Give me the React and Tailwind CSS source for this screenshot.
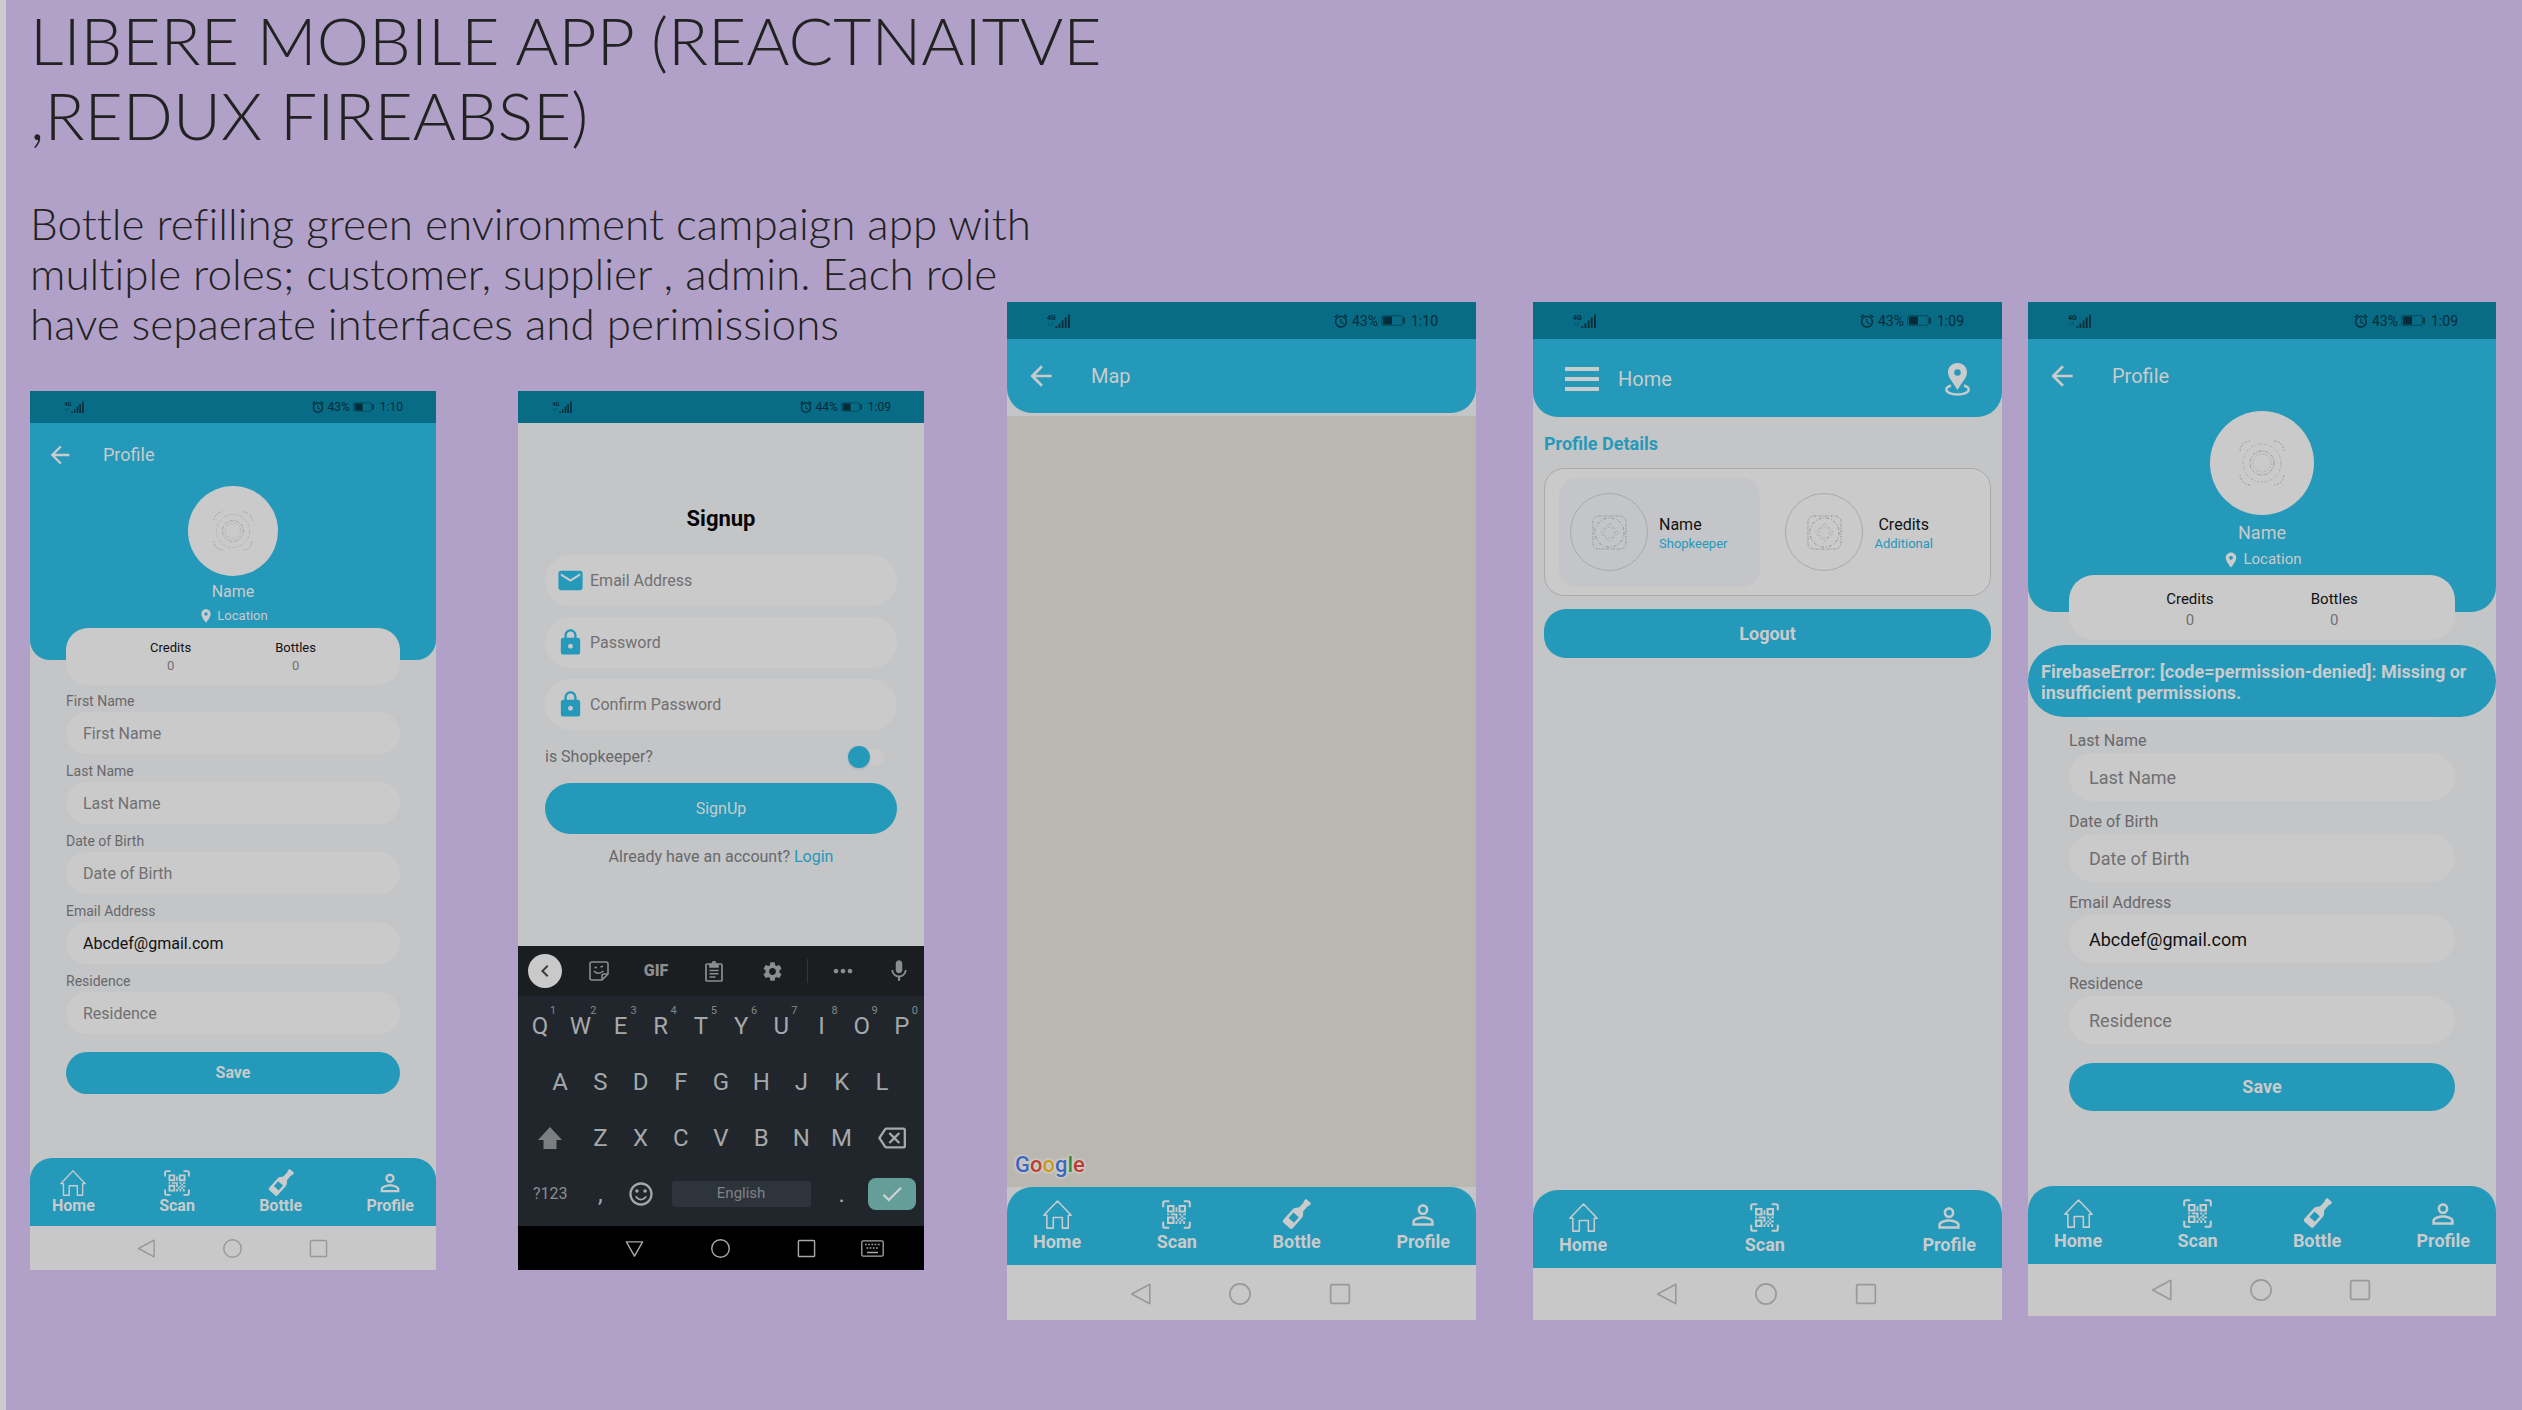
import React from "react";
import {
  MdArrowBack,
  MdLocationOn,
  MdPersonOutline,
  MdEmail,
  MdLock,
  MdSettings,
  MdMic,
  MdMoreHoriz,
  MdOutlineBackspace,
  MdOutlineSentimentSatisfied,
  MdCheck,
  MdChevronLeft,
  MdAlarm,
} from "react-icons/md";

/* Two phone sizes share one set of screens. */
const SIZES = {
  sm: {
    status: "h-8 pl-[34px] pr-[33px] text-xs",
    signal: "w-5 h-3",
    alarm: "size-[14px]",
    battery: "w-[21px] h-[10px]",
    header: "h-[63px] pt-px pl-4 gap-[29px]",
    arrow: "size-7",
    title: "text-lg",
    avatar: "size-[90px]",
    placeholder: "size-10",
    name: "mt-1 text-base leading-6",
    location: "text-[13px] leading-6",
    pin: "size-4",
    hero: "pb-8 rounded-b-[20px]",
    gutter: "mx-9",
    card: "-mt-8 h-[57px] pt-px rounded-[22px] text-[13px] leading-[18px]",
    fields: "mt-[5px] gap-[6px]",
    label: "h-[22px] text-sm leading-[22px]",
    input: "h-[42px] rounded-[21px] pl-[17px] text-base",
    save: "mt-[18px] h-[42px] rounded-[21px] text-base",
    tabs: "h-[68px] pt-[11px] px-[22px] rounded-t-[22px] text-base",
    tabIcon: "h-[27px]",
    icon: "size-[26px]",
    person: "size-7",
    tabText: "leading-5",
    nav: "h-11",
    navIcon: "size-[19px]",
  },
  lg: {
    status: "h-[37px] pl-10 pr-[38px] text-sm",
    signal: "w-[23px] h-[14px]",
    alarm: "size-4",
    battery: "w-6 h-[11px]",
    header: "h-[74px] pl-[18px] gap-[34px]",
    arrow: "size-8",
    title: "text-xl",
    avatar: "-mt-0.5 size-[104px]",
    placeholder: "size-[46px]",
    name: "mt-1 text-lg leading-[27px]",
    location: "text-[15px] leading-[27px]",
    pin: "size-[18px]",
    hero: "pb-[39px] rounded-b-[25px]",
    gutter: "mx-[41px]",
    card: "-mt-[37px] h-[65px] pt-1 rounded-[25px] text-[15px] leading-[21px]",
    fields: "mt-[7px] gap-2",
    label: "h-[25px] text-base leading-[25px]",
    input: "h-12 rounded-[24px] pl-5 text-lg",
    save: "mt-[19px] h-12 rounded-[24px] text-lg",
    tabs: "h-[78px] pt-[13px] px-[26px] rounded-t-[25px] text-lg",
    tabIcon: "h-[29px]",
    icon: "size-[29px]",
    person: "size-8",
    tabText: "leading-[25px]",
    nav: "h-[52px]",
    navIcon: "size-[22px]",
  },
};

function StatusBar({ s, battery, time }) {
  return (
    <div className={`flex shrink-0 items-center justify-between bg-[#086c86] text-[#052b37] ${s.status}`}>
      <svg viewBox="0 0 23 14" className={s.signal} fill="currentColor">
        <text x="0" y="6" fontSize="7" fontWeight="700" fontFamily="Roboto, sans-serif">4G</text>
        <path d="M2 8.5v3M1 10.500l1 1 1-1M5 11.500v-3M4 9.500l1-1 1 1" stroke="currentColor" strokeWidth=".5" fill="none" opacity=".5" />
        <path d="M8.500 12h1.600v2H8.500zM11.500 9.500h1.800V14h-1.800zM14.700 6.500h1.800V14h-1.800zM17.800 3.500h1.800V14h-1.800zM21 .5h1.800V14H21z" />
      </svg>
      <div className="flex items-center gap-[3px]">
        <MdAlarm className={s.alarm} />
        <span>{battery}</span>
        <svg viewBox="0 0 24 11" className={s.battery}>
          <rect x=".7" y=".7" width="20.600" height="9.600" rx="1.500" fill="none" stroke="currentColor" strokeWidth="1" opacity=".55" />
          <rect x="2" y="1.500" width="9" height="8" fill="currentColor" />
          <rect x="22.300" y="2.500" width="1.500" height="6" fill="currentColor" />
        </svg>
        <span className="pl-[3px]">{time}</span>
      </div>
    </div>
  );
}

function BackHeader({ s, title }) {
  return (
    <div className={`flex items-center text-[#c9cbcc] ${s.header}`}>
      <button type="button" aria-label="Back">
        <MdArrowBack className={s.arrow} />
      </button>
      <h2 className={s.title}>{title}</h2>
    </div>
  );
}

function HomeIcon({ className }) {
  return (
    <svg viewBox="0 0 24 24" className={className} fill="none" stroke="currentColor" strokeWidth="1.300" strokeLinejoin="round">
      <path d="M12 .8 23.300 12.600H20.900V23.300H16V14.500H8.500V23.300H3.200V12.600H.7z" />
    </svg>
  );
}

function ScanIcon({ className }) {
  return (
    <svg viewBox="0 0 24 24" className={className} fill="none" stroke="currentColor">
      <path d="M1 6V2.500A1.500 1.500 0 0 1 2.500 1H6M18 1h3.500A1.500 1.500 0 0 1 23 2.500V6M23 18v3.500a1.500 1.500 0 0 1-1.500 1.500H18M6 23H2.500A1.500 1.500 0 0 1 1 21.500V18" strokeWidth="1.700" />
      <path d="M5 5h4.500v4.500H5zM14.500 5H19v4.500h-4.500zM5 14.500h4.500V19H5z" strokeWidth="1.700" />
      <path d="M11.200 6h1.500v4h-1.500zM4.200 11.200h1.600v1.500H4.200zM7.300 11.200h5.500v1.500H7.300zM11.200 12.700h1.600v3h-1.600zM14.300 11.200h1.600v1.600h-1.600zM17.500 11.200h2.300v1.500h-2.300zM15.900 12.800h1.600v1.600h-1.600zM14.300 14.400h1.600V16h-1.600zM17.500 14.400h2.300V16h-2.300zM12.700 16h1.600v1.600h-1.600zM15.900 16h1.600v1.600h-1.600zM11.200 17.600h1.600v2.200h-1.600zM14.300 17.600h1.600v2.200h-1.600zM17.500 17.600h1.600v2.200h-1.600z" fill="currentColor" stroke="none" />
    </svg>
  );
}

function BottleIcon({ className }) {
  return (
    <svg viewBox="0 0 24 24" className={`overflow-visible ${className}`} fill="currentColor">
      <path
        transform="rotate(42 12 12)"
        fillRule="evenodd"
        d="M9.700-3h4.600q.6 0 .6.600v2q0 .6-.6.800V5.500c0 2 2.900 2.800 2.900 5.500V22.500q0 1.700-1.700 1.700H8.500q-1.700 0-1.700-1.700V11c0-2.700 2.900-3.500 2.900-5.500V.4Q9.100.2 9.100-.4v-2q0-.6.600-.6zM9 12.500V18.500h6V12.500z"
      />
    </svg>
  );
}

function Tab({ s, label, children }) {
  return (
    <a href="#" className="flex flex-col items-center font-bold">
      <span className={`flex items-center ${s.tabIcon}`}>{children}</span>
      <span className={s.tabText}>{label}</span>
    </a>
  );
}

function TabBar({ s, bottle = true }) {
  return (
    <nav className={`flex shrink-0 items-start justify-between bg-[#2499b9] text-[#c9cbcc] ${s.tabs}`}>
      <Tab s={s} label="Home"><HomeIcon className={s.icon} /></Tab>
      <Tab s={s} label="Scan"><ScanIcon className={s.icon} /></Tab>
      {bottle && <Tab s={s} label="Bottle"><BottleIcon className={s.icon} /></Tab>}
      <Tab s={s} label="Profile"><MdPersonOutline className={s.person} /></Tab>
    </nav>
  );
}

function SystemNav({ s, dark = false }) {
  const tone = dark ? "bg-black text-[#a8a8a8]" : "bg-[#c8c8c8] text-[#999999]";
  return (
    <div className={`grid shrink-0 grid-cols-[73fr_86fr_86fr_86fr_75fr] items-center ${tone} ${s.nav}`}>
      <span />
      <button type="button" aria-label="Back" className="flex justify-center">
        <svg viewBox="0 0 20 20" className={s.navIcon} fill="none" stroke="currentColor" strokeWidth="1.500" strokeLinejoin="round">
          {dark ? <path d="M1.500 3h17L10 18z" /> : <path d="M18 1.200v17.600L1.500 10z" />}
        </svg>
      </button>
      <button type="button" aria-label="Home" className="flex justify-center">
        <svg viewBox="0 0 20 20" className={s.navIcon} fill="none" stroke="currentColor" strokeWidth="1.500">
          <circle cx="10" cy="10" r="9.200" />
        </svg>
      </button>
      <button type="button" aria-label="Recent apps" className="flex justify-center">
        <svg viewBox="0 0 20 20" className={s.navIcon} fill="none" stroke="currentColor" strokeWidth="1.500">
          <rect x="1.500" y="1.500" width="17" height="17" rx="1" />
        </svg>
      </button>
      {dark && (
        <button type="button" aria-label="Switch keyboard" className="flex pl-3">
          <svg viewBox="0 0 23 17" className="h-[17px] w-[23px]" fill="none" stroke="currentColor">
            <rect x=".8" y=".8" width="21.400" height="15.400" rx="1.500" strokeWidth="1.300" />
            <path d="M4 4.500h15M5.500 8h12" strokeWidth="1.700" strokeDasharray="1.700 1.500" />
            <path d="M6 12.500h11" strokeWidth="1.500" />
          </svg>
        </button>
      )}
    </div>
  );
}

function DottedRings({ className }) {
  return (
    <svg viewBox="0 0 46 46" className={className} fill="none" stroke="#999999" strokeWidth="1">
      <circle cx="23" cy="23" r="9" stroke="#adadad" strokeDasharray="2 1.300" />
      <circle cx="23" cy="23" r="12" strokeDasharray="3 1.300 1 1.300" />
      <circle cx="23" cy="23" r="19" stroke="#a5a5a5" strokeDasharray="2 1.500 1 2" />
      <path d="M1 11Q2 2 11 1M35 1q9 1 10 10M45 35q-1 9-10 10M11 45Q2 44 1 35" strokeDasharray="2 1.500" />
    </svg>
  );
}

function DottedTile({ className }) {
  return (
    <svg viewBox="0 0 36 36" className={className} fill="none" stroke="#8f8f8f" strokeWidth="1">
      <rect x="1" y="1" width="34" height="34" rx="6" strokeDasharray="2 1.200 1 1.500" />
      <circle cx="18" cy="18" r="15" strokeDasharray="3 2 1 2" />
      <path d="M18 8.500 27.500 18 18 27.500 8.500 18z" stroke="#a8a8a8" strokeDasharray="3 2" />
      <circle cx="18" cy="18" r="5.500" stroke="#a8a8a8" strokeDasharray="2 2" />
    </svg>
  );
}

function Field({ s, id, label, value }) {
  return (
    <div className="flex flex-col">
      <label htmlFor={id} className={`text-[#68686b] ${s.label}`}>{label}</label>
      <input
        id={id}
        type="text"
        placeholder={label}
        defaultValue={value}
        className={`w-full bg-[#cacaca] text-[#111111] outline-none placeholder:text-[#707072] ${s.input}`}
      />
    </div>
  );
}

function Phone({ className, children }) {
  return <section className={`relative flex flex-col bg-[#c4c5c7] ${className}`}>{children}</section>;
}

function ProfileScreen({ s, className, prefix, time, error }) {
  return (
    <Phone className={className}>
      <StatusBar s={s} battery="43%" time={time} />
      <div className={`flex flex-col bg-[#2499b9] text-[#c9cbcc] ${s.hero}`}>
        <BackHeader s={s} title="Profile" />
        <div className="flex flex-col items-center">
          <div className={`flex items-center justify-center rounded-full bg-[#cacaca] ${s.avatar}`}>
            <DottedRings className={s.placeholder} />
          </div>
          <p className={s.name}>Name</p>
          <p className={`flex items-center gap-[3px] ${s.location}`}>
            <MdLocationOn className={s.pin} />
            Location
          </p>
        </div>
      </div>
      <dl className={`relative flex items-center justify-evenly bg-[#cacaca] text-center ${s.gutter} ${s.card}`}>
        <div>
          <dt className="text-[#111111]">Credits</dt>
          <dd className="text-[#707072]">0</dd>
        </div>
        <div>
          <dt className="text-[#111111]">Bottles</dt>
          <dd className="text-[#707072]">0</dd>
        </div>
      </dl>
      <form className={`relative flex flex-1 flex-col ${s.gutter}`}>
        <div className={`flex flex-col ${s.fields}`}>
          {error ? (
            <div>
              <div className={s.label} />
              <div className={`bg-[#cacaca] ${s.input}`} />
            </div>
          ) : (
            <Field s={s} id={`${prefix}-first`} label="First Name" />
          )}
          <Field s={s} id={`${prefix}-last`} label="Last Name" />
          <Field s={s} id={`${prefix}-dob`} label="Date of Birth" />
          <Field s={s} id={`${prefix}-email`} label="Email Address" value="Abcdef@gmail.com" />
          <Field s={s} id={`${prefix}-residence`} label="Residence" />
        </div>
        <button type="button" className={`bg-[#2499b9] font-bold text-[#c9cbcc] ${s.save}`}>Save</button>
        {error && (
          <p
            role="alert"
            className="absolute -inset-x-[41px] top-[5px] flex h-[72px] items-center rounded-[36px] bg-[#2499b9] pt-0.5 pr-3 pl-[13px] text-lg leading-[21px] font-bold text-[#c9cbcc]"
          >
            {error}
          </p>
        )}
      </form>
      <TabBar s={s} />
      <SystemNav s={s} />
    </Phone>
  );
}

function IconField({ icon: Icon, label, type }) {
  return (
    <label className="flex h-[51px] items-center gap-[5px] rounded-[26px] bg-[#cacaca] pr-4 pl-[11px]">
      <Icon className="size-[29px] shrink-0 text-[#2499b9]" />
      <input
        type={type}
        aria-label={label}
        placeholder={label}
        className="w-full min-w-0 text-base outline-none placeholder:text-[#707072]"
      />
    </label>
  );
}

const TOP_ROW = ["Q", "W", "E", "R", "T", "Y", "U", "I", "O", "P"];
const HOME_ROW = ["A", "S", "D", "F", "G", "H", "J", "K", "L"];
const BOTTOM_ROW = ["Z", "X", "C", "V", "B", "N", "M"];

function Keyboard() {
  return (
    <div className="flex shrink-0 flex-col bg-[#20262b] text-[#a5a8aa]">
      <div className="grid h-[50px] grid-cols-[53fr_56fr_58fr_58fr_58fr_12fr_60fr_51fr] items-center justify-items-center bg-[#1b1e20] text-[#8b8d8f]">
        <button type="button" aria-label="Collapse toolbar" className="flex size-[34px] items-center justify-center rounded-full bg-[#c9c9c9] text-[#3c3c3c]">
          <MdChevronLeft className="size-6" />
        </button>
        <button type="button" aria-label="Stickers">
          <svg viewBox="0 0 20 20" className="size-5" fill="none" stroke="currentColor" strokeWidth="1.600">
            <path d="M3 1h14a2 2 0 0 1 2 2v10l-6 6H3a2 2 0 0 1-2-2V3a2 2 0 0 1 2-2z" />
            <path d="M19 13h-4q-2 0-2 2v4" />
            <path d="M5 10q4 4.500 9.500 0M5.500 6.500h2.500M11.500 6l2.500-.8" />
          </svg>
        </button>
        <button type="button" className="text-base font-black">GIF</button>
        <button type="button" aria-label="Clipboard">
          <svg viewBox="0 0 18 21" className="h-[21px] w-[18px]" fill="none" stroke="currentColor" strokeWidth="1.700">
            <rect x="1" y="3" width="16" height="17" rx="1" />
            <path d="M5 3.500h8v2.500H5z" fill="currentColor" />
            <circle cx="9" cy="2.300" r="1.500" />
            <path d="M4.500 9.500h9M4.500 12.700h9M4.500 16h6" strokeWidth="1.500" />
          </svg>
        </button>
        <button type="button" aria-label="Settings"><MdSettings className="size-[23px]" /></button>
        <span className="h-6 w-px bg-[#33373a]" />
        <button type="button" aria-label="More"><MdMoreHoriz className="size-7" /></button>
        <button type="button" aria-label="Voice input"><MdMic className="size-[26px]" /></button>
      </div>

      <div className="flex flex-col px-0.5 pt-0.5 pb-1 text-2xl">
        <div className="grid h-14 grid-cols-10">
          {TOP_ROW.map((key, i) => (
            <button key={key} type="button" className="relative">
              {key}
              <span className="absolute top-[7px] right-1 text-[11px] leading-none text-[#85888a]">{(i + 1) % 10}</span>
            </button>
          ))}
        </div>
        <div className="grid h-14 grid-cols-9 px-5">
          {HOME_ROW.map((key) => (
            <button key={key} type="button">{key}</button>
          ))}
        </div>
        <div className="grid h-14 grid-cols-[60fr_40fr_40fr_40fr_40fr_40fr_40fr_40fr_60fr]">
          <button type="button" aria-label="Shift" className="flex items-center justify-center">
            <svg viewBox="0 0 24 22" className="h-[22px] w-6 text-[#7b7f82]" fill="currentColor">
              <path d="M12 0 24 13h-5.500v9h-13v-9H0z" />
            </svg>
          </button>
          {BOTTOM_ROW.map((key) => (
            <button key={key} type="button">{key}</button>
          ))}
          <button type="button" aria-label="Delete" className="flex items-center justify-center">
            <MdOutlineBackspace className="size-7" />
          </button>
        </div>
        <div className="grid h-14 grid-cols-[60fr_40fr_40fr_160fr_40fr_60fr] items-center justify-items-center">
          <button type="button" className="text-base text-[#8b8e90]">?123</button>
          <button type="button">,</button>
          <button type="button" aria-label="Emoji"><MdOutlineSentimentSatisfied className="size-7" /></button>
          <button type="button" className="h-[26px] w-[139px] rounded-[3px] bg-[#2e343c] text-[15px] text-[#7f8386]">English</button>
          <button type="button">.</button>
          <button type="button" aria-label="Done" className="flex h-8 w-12 items-center justify-center rounded-lg bg-[#659e99] text-[#d0d4d4]">
            <MdCheck className="size-[26px]" />
          </button>
        </div>
      </div>
    </div>
  );
}

function SignupScreen({ className }) {
  const s = SIZES.sm;
  return (
    <Phone className={className}>
      <StatusBar s={s} battery="44%" time="1:09" />
      <form className="mx-[27px] flex flex-1 flex-col pt-[81px]">
        <h2 className="text-center text-[22px] leading-[30px] font-bold text-[#060606]">Signup</h2>
        <div className="mt-[21px] flex flex-col gap-[11px]">
          <IconField icon={MdEmail} label="Email Address" type="email" />
          <IconField icon={MdLock} label="Password" type="password" />
          <IconField icon={MdLock} label="Confirm Password" type="password" />
        </div>
        <label className="flex h-[53px] items-center justify-between pr-[13px] text-base text-[#68686b]">
          is Shopkeeper?
          <input
            type="checkbox"
            className="relative h-4 w-9 appearance-none rounded-full bg-[#cacaca] before:absolute before:-top-[3px] before:left-0 before:size-[22px] before:rounded-full before:bg-[#2499b9] before:shadow-sm before:content-['']"
          />
        </label>
        <button type="button" className="h-[51px] rounded-[26px] bg-[#2499b9] text-base text-[#c9cbcc]">SignUp</button>
        <p className="mt-[11px] text-center text-base leading-6 text-[#68686b]">
          Already have an account? <a href="#" className="text-[#2499b9]">Login</a>
        </p>
      </form>
      <Keyboard />
      <SystemNav s={s} dark />
    </Phone>
  );
}

function MapScreen({ className }) {
  const s = SIZES.lg;
  return (
    <Phone className={className}>
      <StatusBar s={s} battery="43%" time="1:10" />
      <div className="rounded-b-[25px] bg-[#2499b9]">
        <BackHeader s={s} title="Map" />
      </div>
      <div className="mt-[3px] flex flex-1 items-end bg-[#bab7b0] pb-[6px] pl-2">
        <span className="text-[22px] leading-8 font-medium [text-shadow:0_0_2px_#d8d8d8,0_0_3px_#d8d8d8,0_0_4px_#d0d0d0]">
          <span className="text-[#3a66bc]">G</span>
          <span className="text-[#bd3d31]">o</span>
          <span className="text-[#c99a16]">o</span>
          <span className="text-[#3a66bc]">g</span>
          <span className="text-[#2c8a45]">l</span>
          <span className="text-[#bd3d31]">e</span>
        </span>
      </div>
      <TabBar s={s} />
      <div className="bg-[#c8c8c8] pt-[3px]">
        <SystemNav s={s} />
      </div>
    </Phone>
  );
}

function HomeScreen({ className }) {
  const s = SIZES.lg;
  return (
    <Phone className={className}>
      <StatusBar s={s} battery="43%" time="1:09" />
      <div className="flex h-[78px] items-center justify-between rounded-b-[25px] bg-[#2499b9] px-8 pt-0.5 text-[#c9cbcc]">
        <div className="flex items-center gap-[19px]">
          <button type="button" aria-label="Menu" className="flex w-[34px] flex-col gap-[6px]">
            <span className="h-1 bg-[#c9cbcc]" />
            <span className="h-1 bg-[#c9cbcc]" />
            <span className="h-1 bg-[#c9cbcc]" />
          </button>
          <h2 className={s.title}>Home</h2>
        </div>
        <button type="button" aria-label="Map">
          <svg viewBox="0 0 25 33" className="h-[33px] w-[25px]">
            <path d="M6 22.500Q1.300 24 1.300 26.500c0 3 5 5 11.200 5s11.200-2 11.200-5q0-2.500-4.700-4" fill="none" stroke="currentColor" strokeWidth="2.400" />
            <path d="M12.500 0C7 0 3 4 3 9.300 3 15 8.500 20 12.500 27 16.500 20 22 15 22 9.300 22 4 18 0 12.500 0zm0 6.200a3.300 3.300 0 1 1 0 6.600 3.300 3.300 0 0 1 0-6.600z" fill="currentColor" fillRule="evenodd" />
          </svg>
        </button>
      </div>
      <div className="flex flex-1 flex-col px-[11px] pt-[14px]">
        <h3 className="text-lg leading-[26px] font-bold text-[#2499b9]">Profile Details</h3>
        <div className="mt-[11px] grid h-32 grid-cols-[201fr_215fr] items-center rounded-[20px] border border-[#a9a9a9] bg-[#cacaca] px-[14px]">
          <div className="flex h-[109px] items-center gap-[11px] rounded-[18px] bg-[#c4c5c8] pl-[11px]">
            <div className="flex size-[78px] items-center justify-center rounded-full border border-[#a9a9a9]">
              <DottedTile className="size-[35px]" />
            </div>
            <div className="pt-1">
              <p className="text-base leading-5 text-[#111111]">Name</p>
              <p className="text-[13px] leading-[18px] text-[#2499b9]">Shopkeeper</p>
            </div>
          </div>
          <div className="flex items-center gap-[11px] pl-[25px]">
            <div className="flex size-[78px] items-center justify-center rounded-full border border-[#a9a9a9]">
              <DottedTile className="size-[35px]" />
            </div>
            <div className="pt-1 text-center">
              <p className="text-base leading-5 text-[#111111]">Credits</p>
              <p className="text-[13px] leading-[18px] text-[#2499b9]">Additional</p>
            </div>
          </div>
        </div>
        <button type="button" className="mt-[13px] h-[49px] rounded-[22px] bg-[#2499b9] text-lg font-bold text-[#c9cbcc]">Logout</button>
      </div>
      <TabBar s={s} bottle={false} />
      <SystemNav s={s} />
    </Phone>
  );
}

export default function App() {
  return (
    <main className="min-h-screen border-l-[6px] border-[#cccccc] bg-[#b1a1c9] pr-[26px] pl-6 font-[Roboto,sans-serif]">
      <div className="grid grid-cols-[minmax(0,977fr)_minmax(0,526fr)_minmax(0,495fr)_minmax(0,468fr)] items-start">
        <div className="pr-[83px]">
          <header className="font-[Lato,sans-serif] font-light whitespace-nowrap text-[#222222] [font-variant-ligatures:none]">
            <h1 className="pt-0.5 text-[66px] leading-[75px]">
              LIBERE MOBILE APP (REACTNAITVE
              <br />
              ,REDUX FIREABSE)
            </h1>
            <p className="mt-[46px] text-[44px] leading-[50px]">
              Bottle refilling green environment campaign app with
              <br />
              multiple roles; customer, supplier , admin. Each role
              <br />
              have sepaerate interfaces and perimissions
            </p>
          </header>
          <div className="mt-[43px] grid grid-cols-2 gap-[82px]">
            <ProfileScreen s={SIZES.sm} prefix="customer" time="1:10" className="min-h-[879px]" />
            <SignupScreen className="min-h-[879px]" />
          </div>
        </div>
        <div className="pt-[302px] pr-[57px]">
          <MapScreen className="min-h-[1018px]" />
        </div>
        <div className="pt-[302px] pr-[26px]">
          <HomeScreen className="min-h-[1018px]" />
        </div>
        <div className="pt-[302px]">
          <ProfileScreen
            s={SIZES.lg}
            prefix="supplier"
            time="1:09"
            className="min-h-[1014px]"
            error="FirebaseError: [code=permission-denied]: Missing or insufficient permissions."
          />
        </div>
      </div>
    </main>
  );
}
